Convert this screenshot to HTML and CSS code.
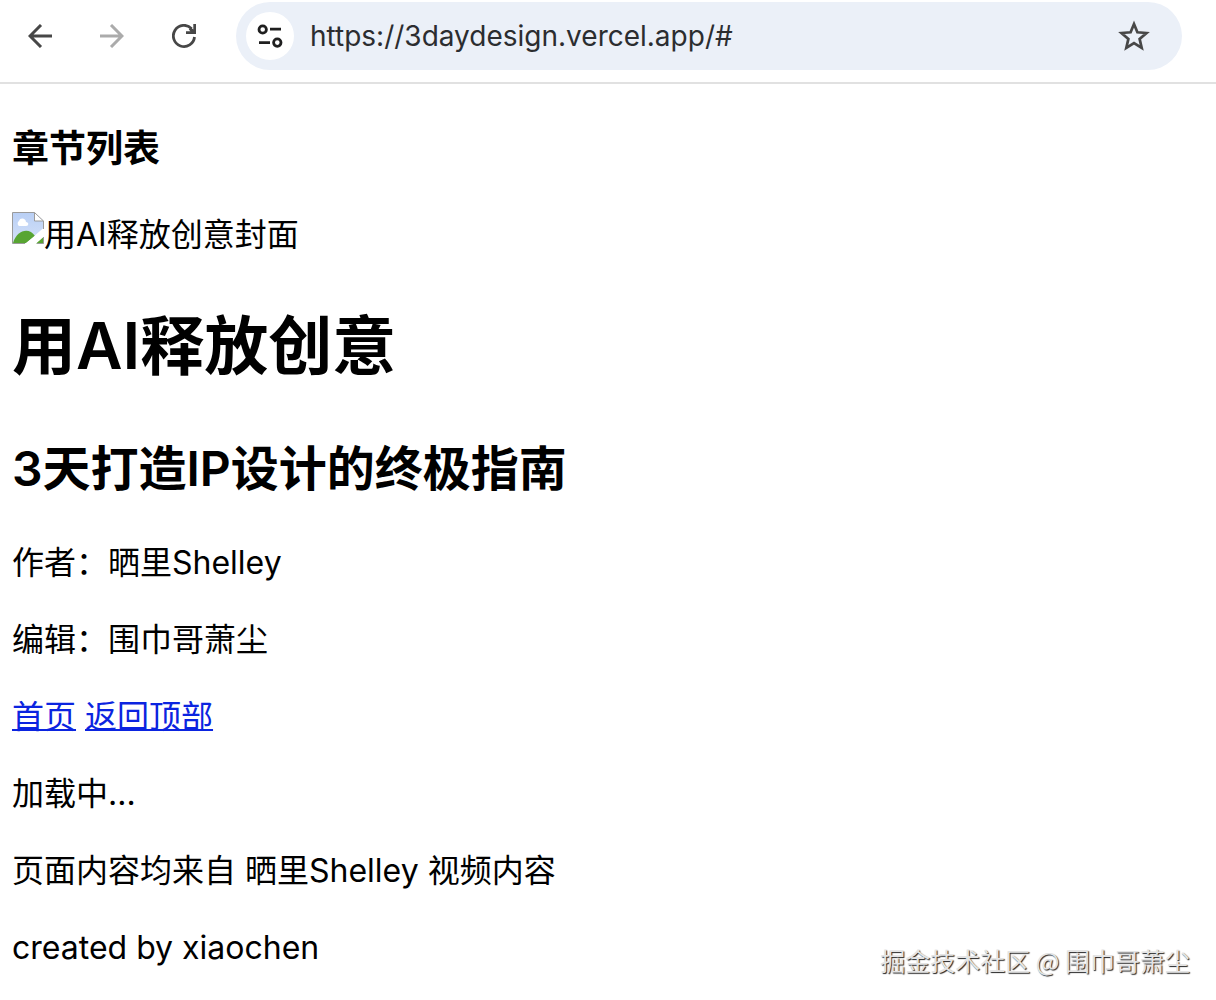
FILE: index.html
```html
<!DOCTYPE html>
<html lang="zh-CN">
<head>
<meta charset="utf-8">
<meta name="viewport" content="width=device-width, initial-scale=1">
<title>用AI释放创意</title>
<link rel="stylesheet" href="styles.css">
</head>
<body>
<header class="toolbar">
  <nav class="nav-buttons" aria-label="浏览器导航">
    <button class="icon-button" type="button" aria-label="后退">
      <svg viewBox="0 0 24 24" width="24" height="24"><path d="M24 12H2M13 1L2 12l11 11" fill="none" stroke="#474747" stroke-width="3"/></svg>
    </button>
    <button class="icon-button" type="button" aria-label="前进" disabled>
      <svg viewBox="0 0 24 24" width="24" height="24"><path d="M0 12h22M11 1l11 11-11 11" fill="none" stroke="#ababab" stroke-width="3"/></svg>
    </button>
    <button class="icon-button" type="button" aria-label="重新加载">
      <svg viewBox="0 0 24 24" width="24" height="24"><path d="M22.500 13A10.600 10.600 0 1 1 19.600 4.600" fill="none" stroke="#474747" stroke-width="2.800"/><path d="M21.300 0H24v10H14V7.300h4.400l-1.600-1.700 2.200-2 2.300 2z" fill="#474747"/></svg>
    </button>
  </nav>
  <div class="address-bar">
    <button class="site-info" type="button" aria-label="查看网站信息">
      <svg viewBox="0 0 26 26" width="26" height="26" fill="none" stroke="#1f1f1f" stroke-width="2.800"><circle cx="5.700" cy="6.500" r="3.700"/><path d="M13 6.200h11M2 19.600h11"/><circle cx="20.300" cy="19.600" r="3.700"/></svg>
    </button>
    <input class="address-input" type="text" aria-label="地址栏" value="https://3daydesign.vercel.app/#" spellcheck="false">
    <button class="icon-button" type="button" aria-label="添加书签">
      <svg viewBox="0 0 32 32" width="32" height="32"><path d="M16 4l3.400 8.300 9.100.7-6.900 5.900 2.100 8.900L16 23l-7.700 4.800 2.100-8.900L3.500 13l9.100-.7z" fill="none" stroke="#474747" stroke-width="2.700"/></svg>
    </button>
  </div>
</header>
<main class="page">
  <h3 class="list-title">章节列表</h3>
  <div class="cover">
    <svg class="cover-icon" viewBox="0 0 32 32" width="32" height="32" aria-hidden="true">
      <defs><linearGradient id="sky" x1="0" y1="0" x2="0" y2="1"><stop offset="0" stop-color="#b9cff5"/><stop offset="1" stop-color="#d5e2f8"/></linearGradient></defs>
      <path d="M.5.500h22l9 8.500v7L14 31.500H.500z" fill="url(#sky)"/>
      <path d="M1 31C5 18 17 15 23 24l-9 7z" fill="#58a532"/>
      <path d="M7 14a3 3 0 0 1 0-5c1-4 7-3 7 1 3 0 3 4 0 4z" fill="#fff"/>
      <path d="M24 31.500L31.500 25v6.500z" fill="#58a532"/>
      <path d="M32 16v8l-9 8H13z" fill="#fff"/>
      <path d="M22.500.500v8.500h9z" fill="#fff"/>
      <path d="M13 31.500H.500V.500h22l9 8.500v8M22.500.500V9h9M31.500 25v6.500H25" fill="none" stroke="#9b9b9b"/>
    </svg><span class="cover-text">用AI释放创意封面</span>
  </div>
  <h1 class="title">用AI释放创意</h1>
  <h2 class="subtitle">3天打造IP设计的终极指南</h2>
  <p class="line">作者：晒里Shelley</p>
  <p class="line">编辑：围巾哥萧尘</p>
  <nav class="line"><a class="link" href="#">首页</a> <a class="link" href="#">返回顶部</a></nav>
  <p class="line">加载中...</p>
  <p class="line">页面内容均来自 晒里Shelley 视频内容</p>
  <p class="line">created by xiaochen</p>
</main>
<div class="watermark">掘金技术社区 @ 围巾哥萧尘</div>
</body>
</html>
```
FILE: styles.css
```css
* {
  box-sizing: border-box;
}

body {
  position: relative;
  min-height: 100vh;
  margin: 0;
  background: #fff;
  color: #000;
  font-family: Inter, "Noto Sans CJK SC", sans-serif;
  font-size: 32px;
  line-height: 45px;
}

button {
  display: flex;
  align-items: center;
  justify-content: center;
  flex: none;
  padding: 0;
  border: 0;
  background: none;
}

.toolbar {
  display: flex;
  align-items: flex-start;
  height: 84px;
  padding: 2px 34px 0 16px;
  border-bottom: 2px solid #e1e1e1;
}

.nav-buttons {
  display: flex;
  gap: 24px;
  padding: 10px 28px 0 0;
}

.icon-button {
  width: 48px;
  height: 48px;
}

.address-bar {
  display: flex;
  flex: 1;
  align-items: center;
  min-width: 0;
  height: 68px;
  padding: 0 24px 0 10px;
  border-radius: 34px;
  background: #ebf0f8;
}

.site-info {
  width: 48px;
  height: 48px;
  border-radius: 50%;
  background: #fff;
}

.address-input {
  flex: 1;
  min-width: 0;
  height: 48px;
  margin-left: 16px;
  padding: 0;
  border: 0;
  outline: 0;
  background: none;
  color: #2b2d30;
  font-family: Inter, sans-serif;
  font-size: 28px;
}

.page {
  padding: 39px 12px 20px;
}

.list-title {
  margin: 0 0 37px;
  font-size: 37px;
  line-height: 52px;
}

.cover {
  display: flex;
  align-items: flex-start;
}

.title {
  margin: 44px 0;
  font-size: 64px;
  font-weight: 600;
  line-height: 90px;
}

.subtitle {
  margin: 0 0 37px;
  font-size: 48px;
  font-weight: 600;
  line-height: 68px;
}

.line {
  margin: 0 0 32px;
}

.line:last-child {
  margin-bottom: 0;
}

.link {
  color: #0b24e0;
  text-decoration-thickness: 2px;
}

.watermark {
  position: absolute;
  right: 26px;
  bottom: 22px;
  color: #e4e4e4;
  font-family: "Noto Sans CJK SC", sans-serif;
  font-size: 25px;
  line-height: 36px;
  text-shadow: 1px 1px 1px #222;
}
```
